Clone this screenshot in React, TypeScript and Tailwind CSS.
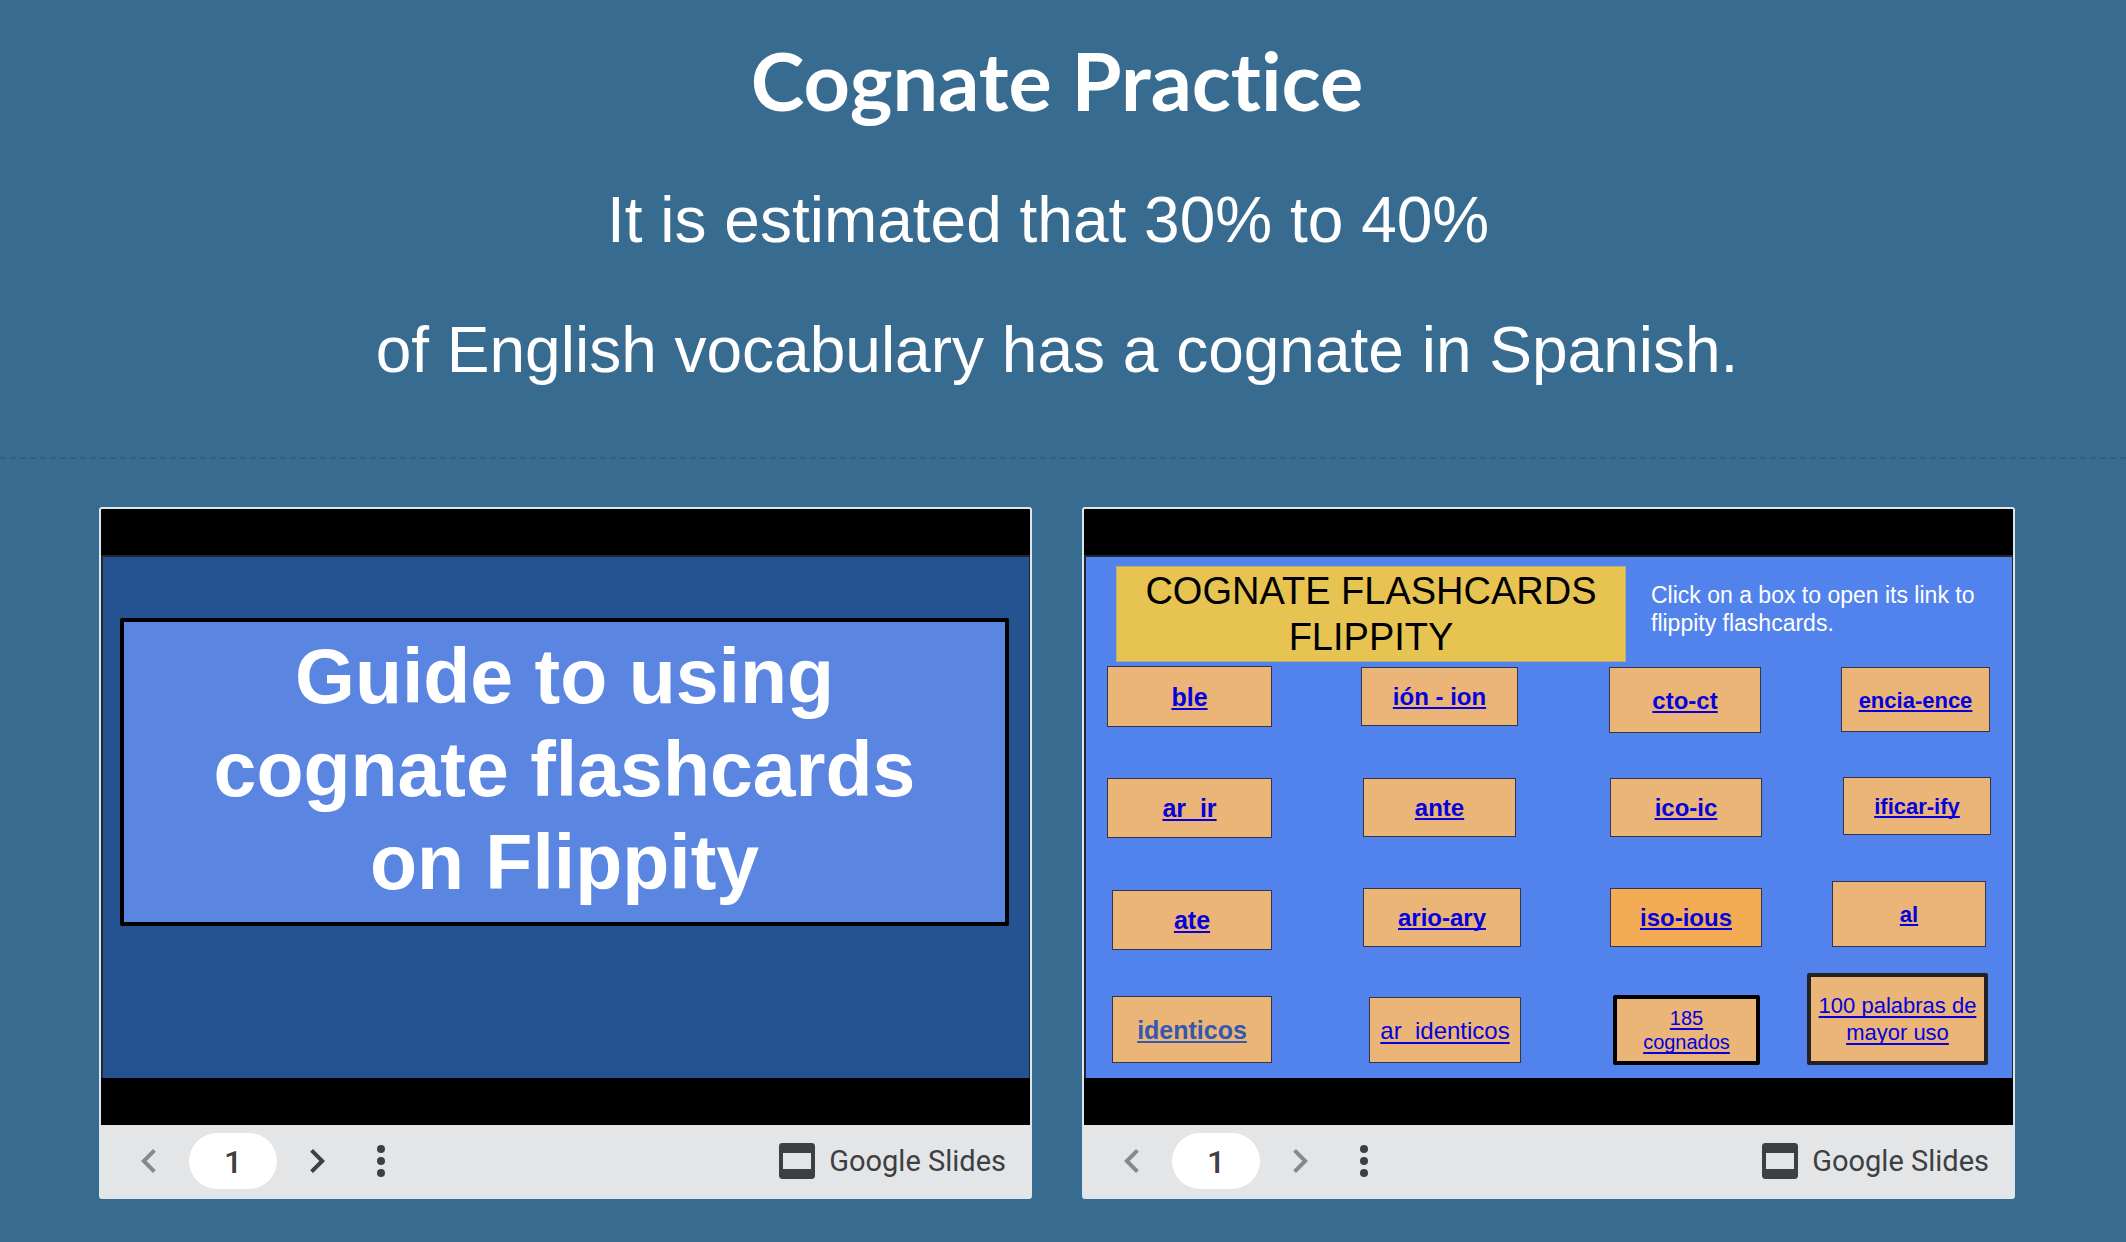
import type { ReactNode } from "react";

const SLIDE_WIDTH = 926;
const SLIDE_HEIGHT = 521;

type Card = {
  label: string;
  x: number;
  y: number;
  w: number;
  h: number;
  look: string;
};

const thin = "border border-[#33354a] pt-0.5";
const tan = "bg-[#ebb577]";
const blue = "text-[#0500dc]";
const bold = "font-bold underline-offset-2";
const regular = "font-normal underline-offset-3";

// Card positions are in slide units; the slide scales them to its own size.
const cards: Card[] = [
  { label: "ble", x: 21, y: 109, w: 165, h: 61, look: `${thin} ${tan} ${blue} ${bold} text-[25px]` },
  { label: "ión - ion", x: 275, y: 110, w: 157, h: 59, look: `${thin} ${tan} ${blue} ${bold} text-2xl` },
  { label: "cto-ct", x: 523, y: 110, w: 152, h: 66, look: `${thin} ${tan} ${blue} ${bold} text-2xl` },
  { label: "encia-ence", x: 755, y: 110, w: 149, h: 65, look: `${thin} ${tan} ${blue} ${bold} text-[22px]` },
  { label: "ar_ir", x: 21, y: 221, w: 165, h: 60, look: `${thin} ${tan} ${blue} ${bold} text-[25px]` },
  { label: "ante", x: 277, y: 221, w: 153, h: 59, look: `${thin} ${tan} ${blue} ${bold} text-2xl` },
  { label: "ico-ic", x: 524, y: 221, w: 152, h: 59, look: `${thin} ${tan} ${blue} ${bold} text-2xl` },
  { label: "ificar-ify", x: 757, y: 220, w: 148, h: 58, look: `${thin} ${tan} ${blue} ${bold} text-[22px]` },
  { label: "ate", x: 26, y: 333, w: 160, h: 60, look: `${thin} ${tan} ${blue} ${bold} text-[25px]` },
  { label: "ario-ary", x: 277, y: 331, w: 158, h: 59, look: `${thin} ${tan} ${blue} ${bold} text-2xl` },
  { label: "iso-ious", x: 524, y: 331, w: 152, h: 59, look: `${thin} bg-[#f3ac54] ${blue} ${bold} text-2xl` },
  { label: "al", x: 746, y: 324, w: 154, h: 66, look: `${thin} ${tan} ${blue} ${bold} text-[22px]` },
  { label: "identicos", x: 26, y: 439, w: 160, h: 67, look: `${thin} ${tan} text-[#3457b0] ${bold} text-[25px]` },
  { label: "ar_identicos", x: 283, y: 440, w: 152, h: 66, look: `${thin} ${tan} ${blue} ${regular} text-2xl` },
  { label: "185 cognados", x: 527, y: 438, w: 147, h: 70, look: `border-4 border-black rounded-xs px-5 ${tan} ${blue} ${regular} text-xl leading-6` },
  { label: "100 palabras de mayor uso", x: 721, y: 416, w: 181, h: 92, look: `border-4 border-[#222222] rounded-xs px-1 ${tan} ${blue} ${regular} text-[22px] leading-[27px]` },
];

function ToolIcon({ children }: { children: ReactNode }) {
  return (
    <svg viewBox="0 0 24 24" className="size-12 fill-current" aria-hidden="true">
      {children}
    </svg>
  );
}

function Player({ title, nextEnabled, children }: { title: string; nextEnabled: boolean; children: ReactNode }) {
  return (
    <section aria-label={title} className="min-w-0 flex-1 overflow-hidden rounded-[3px] border-2 border-[#dde6ec] bg-[#e4e5e7]">
      <div className="bg-black pt-[46px] pb-[47px]">
        <div className="border-t-2 border-r border-l-2 border-[#20252f]">{children}</div>
      </div>
      <div className="flex h-[72px] items-center justify-between px-6 text-[#3c4043]">
        <div className="flex items-center gap-4">
          <button type="button" aria-label="Previous slide" disabled className="text-[#85898c]">
            <ToolIcon>
              <path d="M15.41 7.41 14 6l-6 6 6 6 1.41-1.41L10.83 12z" />
            </ToolIcon>
          </button>
          <button type="button" aria-label="Slide 1" className="h-14 w-[88px] rounded-full bg-white pt-0.5 font-[Roboto,sans-serif] text-[32px] font-medium">
            1
          </button>
          <button type="button" aria-label="Next slide" disabled={!nextEnabled} className="disabled:text-[#85898c]">
            <ToolIcon>
              <path d="M10 6 8.59 7.41 13.17 12l-4.58 4.59L10 18l6-6z" />
            </ToolIcon>
          </button>
          <button type="button" aria-label="More options">
            <ToolIcon>
              <circle cx="12" cy="6" r="2" />
              <circle cx="12" cy="12" r="2" />
              <circle cx="12" cy="18" r="2" />
            </ToolIcon>
          </button>
        </div>
        <a href="#slides" className="flex items-center gap-2 font-[Roboto,sans-serif] text-[29px]">
          <ToolIcon>
            <path
              fillRule="evenodd"
              d="M4.7 3h14.6A1.7 1.7 0 0 1 21 4.7v14.6a1.7 1.7 0 0 1-1.7 1.7H4.7A1.7 1.7 0 0 1 3 19.3V4.7A1.7 1.7 0 0 1 4.7 3zM5 8v8h14V8z"
            />
          </ToolIcon>
          <span className="pt-0.5">Google Slides</span>
        </a>
      </div>
    </section>
  );
}

function GuideSlide() {
  return (
    <div className="aspect-video bg-[#255290] pt-[61px] pr-5 pl-[17px]">
      <div className="rounded-xs border-4 border-black bg-[#5a85e0] px-16 pt-2 pb-[13px] text-center text-[77px] leading-[93px] font-bold text-white">
        Guide to using cognate flashcards on Flippity
      </div>
    </div>
  );
}

function FlashcardSlide() {
  return (
    <div className="relative aspect-video bg-[#5283ed] pt-[9px] pl-[30px]">
      <div className="flex items-start">
        <h2 className="h-24 w-[510px] border border-[#b3ae80] bg-[#e7c352] px-5 pt-px text-center text-[38px] leading-[46px] text-black">
          COGNATE FLASHCARDS FLIPPITY
        </h2>
        <p className="ml-[25px] w-[340px] pt-[15px] text-[23px] leading-7 text-white">
          Click on a box to open its link to flippity flashcards.
        </p>
      </div>
      {cards.map((card) => (
        <a
          key={card.label}
          href={`#${encodeURIComponent(card.label)}`}
          className={`absolute flex items-center justify-center text-center underline decoration-2 [text-decoration-skip-ink:none] ${card.look}`}
          style={{
            left: `${(card.x / SLIDE_WIDTH) * 100}%`,
            top: `${(card.y / SLIDE_HEIGHT) * 100}%`,
            width: `${(card.w / SLIDE_WIDTH) * 100}%`,
            height: `${(card.h / SLIDE_HEIGHT) * 100}%`,
          }}
        >
          {card.label}
        </a>
      ))}
    </div>
  );
}

export default function App() {
  return (
    <div className="min-h-screen bg-[#386b90] font-['Liberation_Sans',Arial,sans-serif]">
      <header className="border-b-2 border-dashed border-[#305f86] pt-8 pr-3 pb-[42px] text-center text-white">
        <h1 className="font-[Lato,sans-serif] text-[81px] leading-24 font-bold [font-variant-ligatures:none]">Cognate Practice</h1>
        <p className="mt-[27px] text-[64px] leading-[130px]">
          It is estimated that 30% to 40%{"\u00a0"}
          <br />
          of English vocabulary has a cognate in Spanish.
        </p>
      </header>
      <main className="flex gap-[50px] pt-12 pr-[111px] pl-[99px]">
        <Player title="Guide to using cognate flashcards" nextEnabled>
          <GuideSlide />
        </Player>
        <Player title="Cognate flashcards" nextEnabled={false}>
          <FlashcardSlide />
        </Player>
      </main>
    </div>
  );
}
